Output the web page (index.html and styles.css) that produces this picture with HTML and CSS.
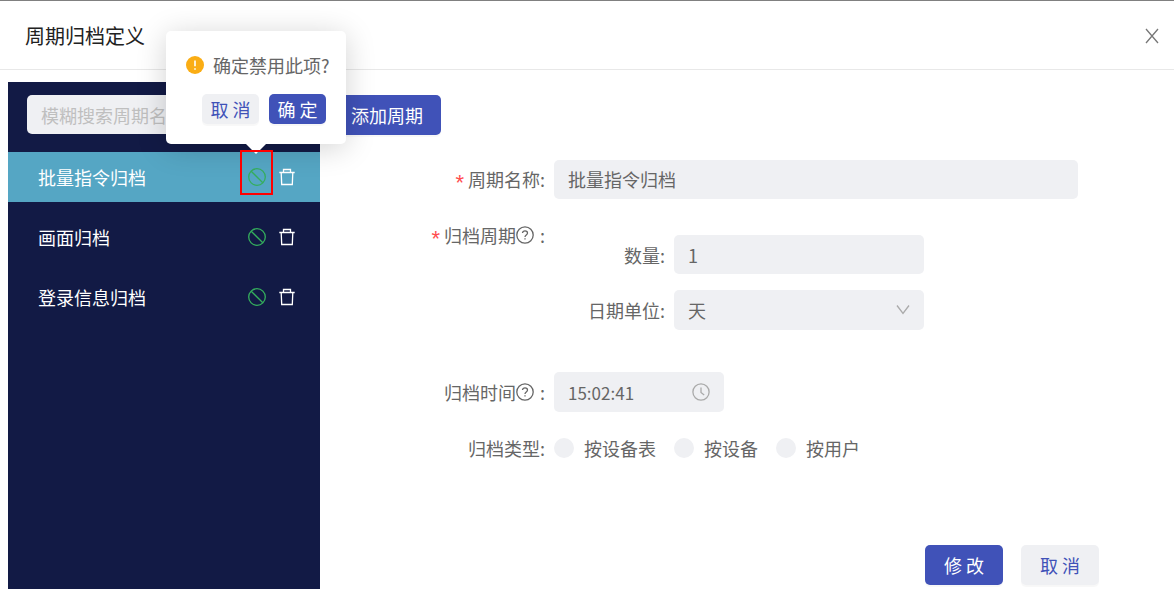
FILE: index.html
```html
<!DOCTYPE html>
<html lang="zh-CN">
<head>
<meta charset="utf-8">
<meta name="viewport" content="width=device-width, initial-scale=1">
<title>周期归档定义</title>
<link rel="stylesheet" href="styles.css">
</head>
<body>
<svg class="sprite" aria-hidden="true">
  <symbol id="stop" viewBox="0 0 18 18"><circle cx="9" cy="9" r="8.300"/><path d="M3.200 3.200l11.600 11.600"/></symbol>
  <symbol id="trash" viewBox="0 0 18 18"><path d="M1.300 4.500h15.400M5.500 4.500v-3h7v3M3.200 4.500l.5 12h10.600l.5-12"/></symbol>
  <symbol id="help" viewBox="0 0 18 18"><circle cx="9" cy="9" r="8.200"/><path d="M6.500 7.100c0-1.400 1.100-2.300 2.500-2.300s2.500.9 2.500 2.200c0 1.900-2.500 1.900-2.500 3.900M9 12.200v1.300"/></symbol>
</svg>
<div class="modal" role="dialog" aria-labelledby="title">
  <header class="modal-header">
    <h1 class="title" id="title">周期归档定义</h1>
    <button class="icon-btn close" type="button" aria-label="关闭">
      <svg class="close-icon" viewBox="0 0 14 16"><path d="M1 1l12 14M13 1L1 15"/></svg>
    </button>
  </header>
  <div class="modal-body">
    <aside class="sidebar">
      <div class="search"><input class="field" type="text" aria-label="搜索" placeholder="模糊搜索周期名称"></div>
      <ul class="list">
        <li class="item item-active">
          <span class="item-name">批量指令归档</span>
          <span class="action">
            <button class="icon-btn" type="button" aria-label="禁用"><svg class="icon stop"><use href="#stop"/></svg></button>
            <span class="highlight"></span>
            <span class="popover" role="alertdialog" aria-labelledby="confirm-text">
              <span class="popover-message">
                <svg class="icon" viewBox="0 0 18 18"><circle class="warn-disc" cx="9" cy="9" r="9"/><path class="warn-mark" d="M9 4.500v5.700M9 12.200v1.600"/></svg>
                <span id="confirm-text">确定禁用此项?</span>
              </span>
              <span class="popover-actions">
                <button class="btn btn-small" type="button">取 消</button>
                <button class="btn btn-small btn-primary" type="button">确 定</button>
              </span>
            </span>
          </span>
          <button class="icon-btn" type="button" aria-label="删除"><svg class="icon"><use href="#trash"/></svg></button>
        </li>
        <li class="item">
          <span class="item-name">画面归档</span>
          <button class="icon-btn" type="button" aria-label="禁用"><svg class="icon stop"><use href="#stop"/></svg></button>
          <button class="icon-btn" type="button" aria-label="删除"><svg class="icon"><use href="#trash"/></svg></button>
        </li>
        <li class="item">
          <span class="item-name">登录信息归档</span>
          <button class="icon-btn" type="button" aria-label="禁用"><svg class="icon stop"><use href="#stop"/></svg></button>
          <button class="icon-btn" type="button" aria-label="删除"><svg class="icon"><use href="#trash"/></svg></button>
        </li>
      </ul>
    </aside>
    <main class="content">
      <div class="toolbar"><button class="btn btn-primary" type="button">添加周期</button></div>
      <form class="form">
        <div class="row">
          <label class="label" for="name"><span class="required">*</span>周期名称:</label>
          <input class="field" id="name" type="text" value="批量指令归档" disabled>
        </div>
        <div class="row period">
          <div class="label label-top"><span class="required">*</span>归档周期<svg class="icon"><use href="#help"/></svg><span class="colon">:</span></div>
          <div class="subform">
            <label class="label" for="count">数量:</label>
            <input class="field" id="count" type="text" value="1" disabled>
            <label class="label" for="unit">日期单位:</label>
            <span class="affix">
              <select class="field" id="unit" disabled><option>天</option></select>
              <svg class="affix-icon arrow" viewBox="0 0 14 10"><path d="M1 .5l6 8 6-8"/></svg>
            </span>
          </div>
        </div>
        <div class="row">
          <label class="label" for="time">归档时间<svg class="icon"><use href="#help"/></svg><span class="colon">:</span></label>
          <span class="affix time">
            <input class="field" id="time" type="text" value="15:02:41" disabled>
            <svg class="affix-icon icon" viewBox="0 0 18 18"><circle cx="9" cy="9" r="8.100"/><path d="M9 4.500v5l3.200 2.400"/></svg>
          </span>
        </div>
        <div class="row">
          <span class="label" id="type-label">归档类型:</span>
          <div class="radios" role="radiogroup" aria-labelledby="type-label">
            <label class="radio"><input class="dot" type="radio" name="type" disabled>按设备表</label>
            <label class="radio"><input class="dot" type="radio" name="type" disabled>按设备</label>
            <label class="radio"><input class="dot" type="radio" name="type" disabled>按用户</label>
          </div>
        </div>
      </form>
      <footer class="footer">
        <button class="btn btn-primary" type="button">修 改</button>
        <button class="btn" type="button">取 消</button>
      </footer>
    </main>
  </div>
</div>
</body>
</html>
```
FILE: styles.css
```css
* { box-sizing: border-box; }
body {
  margin: 0;
  color: #666;
  background: #fff;
  font: 18px/28px "Noto Sans CJK SC", sans-serif;
}
button, input, select { font: inherit; }
.sprite { position: absolute; width: 0; height: 0; }
svg { fill: none; stroke: currentColor; stroke-width: 1.3; }
.icon { display: block; width: 18px; height: 18px; flex: none; }

.modal {
  display: flex;
  flex-direction: column;
  min-height: 100vh;
  border-top: 1px solid #808080;
}
.modal-header {
  display: flex;
  align-items: center;
  justify-content: space-between;
  height: 69px;
  padding: 2px 15px 0 25px;
  border-bottom: 1px solid #e8e8e8;
}
.title { margin: 0; font-size: 20px; font-weight: 400; color: #222; }
.icon-btn { display: block; padding: 0; border: 0; background: none; color: inherit; cursor: pointer; }
.close { color: #777; }
.close-icon { display: block; width: 14px; height: 16px; }
.modal-body { display: flex; flex: 1; padding: 12px 8px 0; }

.sidebar { flex: none; width: 312px; background: #121a45; color: #fff; }
.search { padding: 13px 19px 18px; }
.list { display: grid; gap: 10px; margin: 0; padding: 0; list-style: none; }
.item { display: flex; align-items: center; gap: 12px; height: 50px; padding: 0 24px 0 30px; }
.item-active { background: #55a6c4; }
.item-name { flex: 1; }
.stop { color: #35ae5d; }
.action { position: relative; }

.field {
  display: block;
  width: 100%;
  height: 39px;
  padding: 0 14px;
  border: 0;
  border-radius: 5px;
  background: #eff0f3;
  color: #666;
  opacity: 1;
  appearance: none;
}
.field::placeholder { color: #bfbfbf; opacity: 1; }

.btn {
  height: 40px;
  padding: 0 18px;
  min-width: 78px;
  border: 0;
  border-radius: 5px;
  background: #eff0f3;
  box-shadow: 0 2px 1px rgba(0, 0, 0, .03);
  color: #4052b8;
  white-space: pre;
  cursor: pointer;
}
.btn-primary { background: #4052b8; color: #fff; }
.btn-small { height: 30px; min-width: 57px; padding: 0 8px; }

.popover {
  position: absolute;
  z-index: 2;
  bottom: 42px;
  left: 50%;
  display: flex;
  flex-direction: column;
  gap: 15px;
  width: 180px;
  margin-left: -91px;
  padding: 20px;
  border-radius: 5px;
  background: #fff;
  box-shadow: 0 4px 30px rgba(0, 0, 0, .18);
  color: #666;
  white-space: nowrap;
}
.popover::after {
  content: "";
  position: absolute;
  top: 100%;
  left: 50%;
  margin-left: -10px;
  border: 10px solid transparent;
  border-top-color: #fff;
  border-bottom: 0;
}
.popover-message { display: flex; align-items: center; gap: 9px; }
.popover-actions { display: flex; justify-content: flex-end; gap: 10px; }
.warn-disc { fill: #faad14; stroke: none; }
.warn-mark { stroke: #fff; stroke-width: 1.6; }
.highlight {
  position: absolute;
  z-index: 3;
  inset: -18px -7px -9px -8px;
  border: 2px solid #f00;
  pointer-events: none;
}

.content { display: flex; flex: 1; flex-direction: column; min-width: 0; padding: 13px 0 4px; }
.toolbar { padding-left: 13px; }
.form { display: grid; gap: 16px; padding: 24px 88px 16px 0; }
.row { display: grid; grid-template-columns: 225px 1fr; gap: 9px; align-items: center; min-height: 40px; }
.label { display: flex; align-items: center; justify-content: flex-end; white-space: nowrap; }
.label-top { align-self: start; padding-top: 6px; }
.required { margin-right: 4px; font-family: "Liberation Sans", sans-serif; font-size: 22px; line-height: 28px; height: 20px; color: #ff4d4f; }
.colon { margin-left: 6px; }
.period { padding-bottom: 26px; }
.subform {
  display: grid;
  grid-template-columns: 111px 250px;
  gap: 16px 9px;
  align-items: center;
  padding-top: 20px;
}
.affix { position: relative; }
.affix .field { height: 40px; }
.affix-icon { position: absolute; top: 50%; right: 14px; color: #aaa; transform: translateY(-50%); pointer-events: none; }
.arrow { width: 14px; height: 10px; }
.time { width: 170px; }
.time .field { font-size: 17px; }
.radios { display: flex; gap: 18px; }
.radio { display: flex; align-items: center; gap: 10px; }
.dot { width: 20px; height: 20px; margin: 0; border-radius: 50%; background: #eff0f3; appearance: none; }
.footer { display: flex; justify-content: flex-end; gap: 18px; margin-top: auto; padding-right: 67px; }
```
